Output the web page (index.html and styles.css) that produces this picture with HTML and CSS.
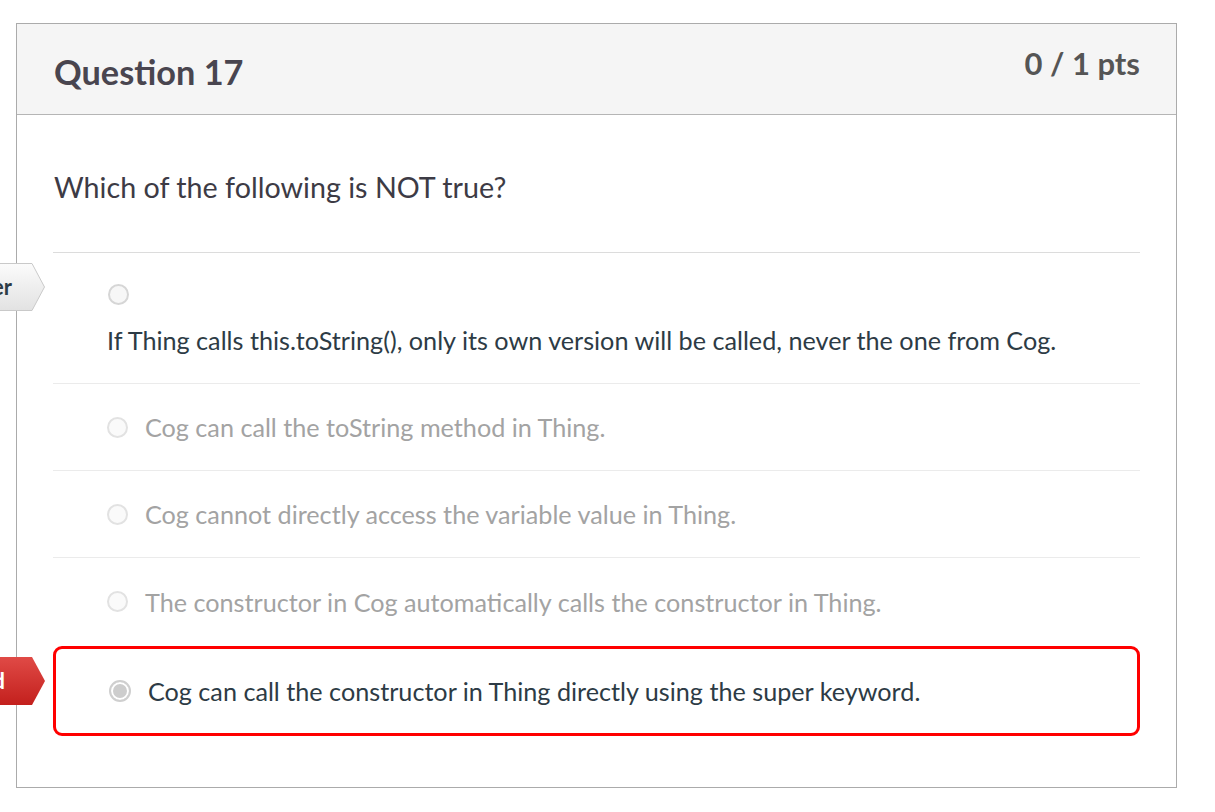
FILE: index.html
```html
<!DOCTYPE html>
<html>
<head>
<meta charset="utf-8">
<link rel="stylesheet" href="styles.css">
</head>
<body>
<div class="card">
  <div class="card-header">
    <h2 class="title">Question 17</h2>
    <div class="pts">0 / 1 pts</div>
  </div>
  <div class="card-body">
    <p class="question">Which of the following is NOT true?</p>
    <div class="answers">
      <div class="answer answer-correct">
        <span class="radio"></span>
        <div class="answer-text">If Thing calls this.toString(), only its own version will be called, never the one from Cog.</div>
        <div class="tag tag-correct">
          <svg class="tag-shape" width="150" height="48" viewBox="0 0 150 48">
            <defs>
              <linearGradient id="gGray" x1="0" y1="0" x2="0" y2="1">
                <stop offset="0" stop-color="#fbfbfb"/>
                <stop offset="1" stop-color="#e2e2e2"/>
              </linearGradient>
            </defs>
            <polygon points="0,0.5 137,0.5 149.5,24 137,47.5 0,47.5" fill="url(#gGray)" stroke="#c9c9c9" stroke-width="1"/>
          </svg>
          <span class="tag-label">Correct Answer</span>
        </div>
      </div>
      <div class="answer answer-muted">
        <span class="radio"></span>
        <span class="answer-text">Cog can call the toString method in Thing.</span>
      </div>
      <div class="answer answer-muted">
        <span class="radio"></span>
        <span class="answer-text">Cog cannot directly access the variable value in Thing.</span>
      </div>
      <div class="answer answer-muted answer-last">
        <span class="radio"></span>
        <span class="answer-text">The constructor in Cog automatically calls the constructor in Thing.</span>
      </div>
      <div class="answer answer-selected">
        <span class="radio radio-checked"></span>
        <span class="answer-text">Cog can call the constructor in Thing directly using the super keyword.</span>
        <div class="tag tag-wrong">
          <svg class="tag-shape" width="150" height="48" viewBox="0 0 150 48">
            <defs>
              <linearGradient id="gRed" x1="0" y1="0" x2="0" y2="1">
                <stop offset="0" stop-color="#e04a46"/>
                <stop offset="1" stop-color="#c3201d"/>
              </linearGradient>
            </defs>
            <polygon points="0,0 137,0 150,24 137,48 0,48" fill="url(#gRed)"/>
          </svg>
          <span class="tag-label">You Answered</span>
        </div>
      </div>
    </div>
  </div>
</div>
</body>
</html>
```

FILE: styles.css
```css
* { box-sizing: border-box; }

html, body {
  margin: 0;
  padding: 0;
  background: #ffffff;
}

body {
  font-family: Lato, "Open Sans", "Liberation Sans", sans-serif;
  color: #2d3b45;
  padding: 23px 0 0 16px;
  position: relative;
}

.card {
  width: 1161px;
  height: 765px;
  border: 1px solid #ababab;
  background: #fff;
}

.card-header {
  height: 91px;
  background: #f5f5f5;
  border-bottom: 1px solid #b5b5b5;
  display: flex;
  justify-content: space-between;
  align-items: flex-start;
  padding: 0 36px 0 37px;
}

.title {
  margin: 28px 0 0 0;
  font-size: 34.3px;
  line-height: 40px;
  font-weight: 700;
  color: #49454f;
}

.pts {
  margin-top: 21px;
  font-size: 31px;
  line-height: 36px;
  font-weight: 700;
  color: #555555;
}

.card-body {
  padding: 0 36px 0 36px;
}

.question {
  margin: 0;
  padding: 52px 0 0 1px;
  height: 138px;
  font-size: 28.7px;
  line-height: 40px;
  color: #3d3b45;
  border-bottom: 1px solid #dcdcdc;
}

.answers {
  display: flex;
  flex-direction: column;
}

.answer {
  position: relative;
  display: flex;
  align-items: center;
  gap: 17px;
  height: 87px;
  padding-left: 54px;
  border-bottom: 1px solid #ebebeb;
  font-size: 25.2px;
  line-height: 30px;
}

.answer-last {
  border-bottom: none;
}

.radio {
  flex: none;
  width: 21px;
  height: 21px;
  border-radius: 50%;
  border: 2px solid #d6d6d6;
  background: #f7f7f7;
}

.answer-correct {
  height: 131px;
  flex-direction: column;
  align-items: flex-start;
  gap: 0;
  padding-top: 31px;
  padding-left: 54px;
  color: #2d3b45;
}

.answer-correct .radio {
  margin-left: 1px;
}

.answer-correct .answer-text {
  margin-top: 20px;
}

.answer-muted {
  color: #a3a3a3;
}

.answer-muted .radio {
  border-color: #e2e2e2;
  background: #fafafa;
}

.answer-selected {
  height: 90px;
  margin-top: 1px;
  border: 3px solid #ff0000;
  border-radius: 9px;
  padding-left: 53px;
  gap: 17px;
  color: #2d3b45;
}

.radio-checked {
  width: 22px;
  height: 22px;
  border-color: #cfcfcf;
  background: #ffffff;
  box-shadow: inset 0 0 0 2px #ffffff, inset 0 0 0 10px #cdcdcd;
}

.tag {
  position: absolute;
  left: -158px;
  width: 150px;
  height: 48px;
}

.tag-correct {
  top: 10px;
}

.tag-wrong {
  left: -161px;
  top: 8px;
}

.tag-shape {
  position: absolute;
  left: 0;
  top: 0;
  display: block;
}

.tag-label {
  position: absolute;
  right: 33px;
  top: 0;
  line-height: 48px;
  font-size: 22px;
  font-weight: 700;
  white-space: nowrap;
}

.tag-correct .tag-label {
  color: #2d3b45;
}

.tag-wrong .tag-label {
  color: #ffffff;
  right: 40px;
}
```
